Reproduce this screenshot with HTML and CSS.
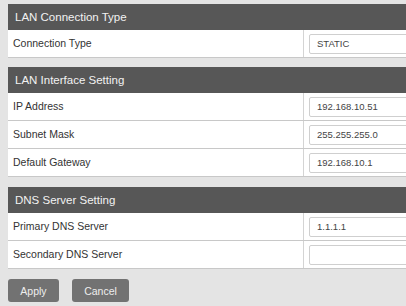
FILE: index.html
```html
<!DOCTYPE html>
<html lang="en">
  <head>
    <meta charset="UTF-8" />
    <meta name="viewport" content="width=device-width, initial-scale=1.0" />
    <title>LAN Settings</title>
    <link rel="stylesheet" href="styles.css">
  </head>
  <body>
    <div class="settings">
      <div class="section">
        <div class="section-title">LAN Connection Type</div>
        <div class="row">
          <div class="label">Connection Type</div>
          <div class="value"><div class="field">STATIC</div></div>
        </div>
      </div>

      <div class="section">
        <div class="section-title">LAN Interface Setting</div>
        <div class="row">
          <div class="label">IP Address</div>
          <div class="value"><div class="field">192.168.10.51</div></div>
        </div>
        <div class="row">
          <div class="label">Subnet Mask</div>
          <div class="value"><div class="field">255.255.255.0</div></div>
        </div>
        <div class="row">
          <div class="label">Default Gateway</div>
          <div class="value"><div class="field">192.168.10.1</div></div>
        </div>
      </div>

      <div class="section">
        <div class="section-title">DNS Server Setting</div>
        <div class="row">
          <div class="label">Primary DNS Server</div>
          <div class="value"><div class="field">1.1.1.1</div></div>
        </div>
        <div class="row">
          <div class="label">Secondary DNS Server</div>
          <div class="value"><div class="field"></div></div>
        </div>
      </div>

      <div class="actions">
        <button class="btn apply">Apply</button>
        <button class="btn cancel">Cancel</button>
      </div>
    </div>
  </body>
</html>
```

FILE: styles.css
```css
body {
  margin: 0;
  background: #e4e4e4;
  font-family: "Liberation Sans", Arial, sans-serif;
  overflow: hidden;
}
.settings {
  width: 460px;
  padding: 4px 0 0 8px;
}
.section {
  margin-bottom: 10px;
}
.section:first-child {
  margin-bottom: 9px;
}
.section-title {
  height: 26px;
  line-height: 26px;
  padding-left: 7px;
  background: #575757;
  color: #f2f2f2;
  font-size: 11.5px;
}
.row {
  display: grid;
  grid-template-columns: 295px 1fr;
  height: 28px;
  background: #fff;
  border-bottom: 1px solid #c8c8c8;
  box-sizing: border-box;
}
.label {
  padding-left: 5px;
  line-height: 27px;
  font-size: 10.5px;
  color: #333;
}
.value {
  border-left: 1px solid #d4d4d4;
  padding: 4px 0 0 5px;
}
.field {
  height: 18px;
  line-height: 18px;
  border: 1px solid #cfcfcf;
  border-radius: 2px;
  padding-left: 7px;
  font-size: 9.5px;
  color: #444;
}
.actions {
  display: flex;
  gap: 13px;
}
.btn {
  height: 23px;
  border: none;
  border-radius: 3px;
  background: #727272;
  color: #eee;
  font-family: "Liberation Sans", Arial, sans-serif;
  font-size: 10.5px;
}
.apply {
  width: 51px;
}
.cancel {
  width: 57px;
}
```
